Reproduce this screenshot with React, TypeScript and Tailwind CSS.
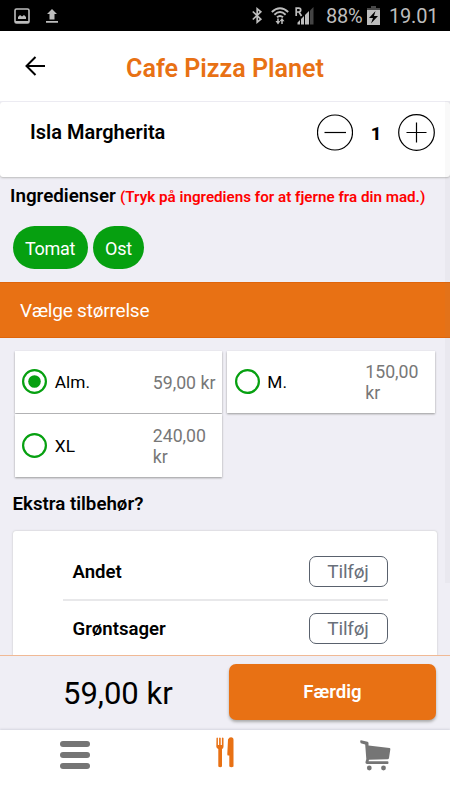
import { useState } from "react"

type SizeOptionProps = {
  label: string
  price: string
  selected: boolean
  onSelect: () => void
}

type ExtraRowProps = {
  label: string
}

const sizes = [
  { label: "Alm.", price: "59,00 kr" },
  { label: "M.", price: "150,00 kr" },
  { label: "XL", price: "240,00 kr" },
]

const ingredients = ["Tomat", "Ost"]

const StatusBar = () => (
  <div className="flex h-[31px] shrink-0 items-center bg-black text-[#bdbdbd]">
    <svg className="ml-[14px] h-4 w-4" viewBox="0 0 16 16" fill="none">
      <rect x="1" y="1" width="14" height="14" rx="1.5" stroke="currentColor" strokeWidth="1.6" />
      <path d="M1 13h14v2H1zM4 11V9l2-2 2 1.5L10 7l2 2v2z" fill="currentColor" />
    </svg>
    <svg className="ml-4 h-[14px] w-3" viewBox="0 0 12 14" fill="currentColor">
      <path d="M6 0l5 5H8.5v5.5h-5V5H1zM0 12h12v1.7H0z" />
    </svg>

    <svg className="ml-auto h-[17px] w-[11px]" viewBox="0 0 11 17" fill="none" stroke="currentColor" strokeWidth="1.7">
      <path d="M.8 4.5l8 7.700L5.200 15.200V1.800l3.600 3L.8 12.500" />
    </svg>
    <svg className="ml-[8px] h-[18px] w-[18px]" viewBox="0 0 18 18" fill="none" stroke="currentColor" strokeWidth="1.9">
      <path d="M.8 5Q9-2.500 17.200 5M3.400 7.700Q9 2.500 14.600 7.700M6 10.300Q9 7.500 12 10.300" />
      <path d="M7 11.500v3.500M11 17v-4" strokeWidth="1.500" />
      <path d="M4.500 14h5L7 17.500zM8.500 14.300h5L11 11z" fill="currentColor" stroke="none" />
    </svg>
    <svg className="ml-[6px] h-[18px] w-[19px]" viewBox="0 0 19 18">
      <path d="M1.200 9V1.200h2.600a1.900 1.900 0 0 1 0 3.800H1.200M4 5l2.500 4" fill="none" stroke="currentColor" strokeWidth="1.700" />
      <path d="M2.500 15.500L5 13v4.500H2.500zM6 12l3-3v8.500H6zM10 8l4-4v13.500h-4z" fill="currentColor" />
      <path d="M15 3.500L18.500 0v17.500H15z" fill="#444" />
    </svg>
    <span className="ml-[12px] w-[37px] text-[20px] leading-none tracking-[-0.3px] whitespace-nowrap">88%</span>
    <svg className="ml-[4px] h-[19px] w-[13px]" viewBox="0 0 13 19">
      <path d="M4 0h5v2h4v4H0V2h4z" fill="#484848" />
      <path d="M0 4h13v15H0z" fill="currentColor" />
      <path d="M8.500 5l-6.500 7h4l-2 5.500 7-7.500H7z" fill="#000" />
    </svg>
    <span className="ml-[9px] mr-[12px] w-[49px] text-[20px] leading-none tracking-[-0.2px] whitespace-nowrap">19.01</span>
  </div>
)

const Header = () => (
  <header className="flex h-[70px] shrink-0 items-center bg-white pl-[25px]">
    <button aria-label="Tilbage">
      <svg className="h-5 w-5" viewBox="0 0 20 20" fill="none" stroke="#000" strokeWidth="2">
        <path d="M20 10H2M10.500 1L1.500 10l9 9" />
      </svg>
    </button>
    <h1 className="ml-[81px] pt-[5px] text-[25.100px] font-semibold whitespace-nowrap text-[#e87114]">Cafe Pizza Planet</h1>
  </header>
)

const SizeOption = ({ label, price, selected, onSelect }: SizeOptionProps) => (
  <button onClick={onSelect} className="flex h-[62.500px] w-[207.500px] items-center bg-white pl-[7.500px] text-left shadow-[0_1px_2px_#999]">
    <svg className="h-[25px] w-[25px] shrink-0" viewBox="0 0 25 25">
      <circle cx="12.500" cy="12.500" r="11.400" fill="none" stroke="#06a010" strokeWidth="2.200" />
      {selected && <circle cx="12.500" cy="12.500" r="6.300" fill="#06a010" />}
    </svg>
    <span className="ml-[7.500px] w-[98px] shrink-0 pt-[2px] text-[17.300px]">{label}</span>
    <span className="w-[65px] pt-[2px] text-[17.700px] leading-[20.500px] text-[#777]">{price}</span>
  </button>
)

const ExtraRow = ({ label }: ExtraRowProps) => (
  <div className="flex h-[57px] items-center justify-between border-b-2 border-[#e8e8ea] pl-[10px]">
    <span className="pt-[3px] text-[18.600px] font-semibold">{label}</span>
    <button className="flex h-[31px] w-[79px] items-center justify-center rounded-[7px] border border-[#59616d] pt-[2px] text-[19px] tracking-[-0.2px] text-[#69707a]">Tilføj</button>
  </div>
)

const App = () => {
  const [selected, setSelected] = useState("Alm.")
  const [count, setCount] = useState(1)

  return (
    <div className="flex h-[800px] w-[450px] flex-col overflow-hidden bg-[#efeef5] font-['Roboto',sans-serif] text-black">
      <StatusBar />
      <Header />

      <main className="relative flex min-h-0 flex-1 flex-col overflow-hidden">
        <section className="mt-px flex h-[75px] shrink-0 rounded-[3px] bg-white pl-[30px] shadow-[0_1px_2px_#bbb]">
          <h2 className="w-[287px] pt-[17px] text-[20px] leading-[26px] font-semibold">Isla Margherita</h2>
          <button aria-label="Færre" className="mt-[12px] h-[37px] w-9" onClick={() => setCount(Math.max(1, count - 1))}>
            <svg className="h-[37px] w-9" viewBox="0 0 36 37" fill="none" stroke="#000" strokeWidth="1.200">
              <circle cx="18" cy="18.500" r="17.500" />
              <path d="M7.500 18.500h21.500" />
            </svg>
          </button>
          <span className="mt-[20px] w-[45px] pl-px text-center text-[18.500px] leading-6 font-extrabold">{count}</span>
          <button aria-label="Flere" className="mt-[12px] h-[37px] w-[37px]" onClick={() => setCount(count + 1)}>
            <svg className="h-[37px] w-[37px]" viewBox="0 0 37 37" fill="none" stroke="#000" strokeWidth="1.200">
              <circle cx="18.500" cy="18.500" r="17.800" />
              <path d="M8.500 18.500h20M18.500 8.500v20" />
            </svg>
          </button>
        </section>

        <section className="h-[105px] shrink-0 pt-[5px]">
          <div className="flex h-6 items-baseline pl-[10px] whitespace-nowrap">
            <h2 className="w-[110px] text-[18.800px] font-semibold">Ingredienser</h2>
            <span className="text-[15.200px] font-semibold text-[#f00]">(Tryk på ingrediens for at fjerne fra din mad.)</span>
          </div>
          <div className="mt-[20px] ml-[12.500px] flex gap-[5px]">
            {ingredients.map(name => (
              <button key={name} className="h-[43px] rounded-full bg-[#06a010] px-[12.500px] pt-px text-[18px] tracking-[-0.3px] text-white">{name}</button>
            ))}
          </div>
        </section>

        <h2 className="flex h-[56px] shrink-0 items-center border-y border-[#df650b] bg-[#e87114] pt-[2px] pl-5 text-[19px] tracking-[-0.200px] text-white">Vælge størrelse</h2>

        <section className="mt-[12.700px] ml-[14.800px] grid shrink-0 grid-cols-[207.500px_207.500px] gap-x-[5px] gap-y-[1.300px]">
          {sizes.map(size => (
            <SizeOption key={size.label} label={size.label} price={size.price} selected={selected === size.label} onSelect={() => setSelected(size.label)} />
          ))}
        </section>

        <h2 className="mt-[14px] ml-[12.500px] shrink-0 text-[18.700px] leading-[26px] font-semibold">Ekstra tilbehør?</h2>
        <section className="mt-[14px] mr-[13px] ml-[12.500px] h-[145px] shrink-0 rounded-[3px] bg-white pt-[13px] pr-[49.500px] pl-[50px] shadow-[0_0_2px_#bbb]">
          <ExtraRow label="Andet" />
          <ExtraRow label="Grøntsager" />
        </section>

        {/* scroll indicator */}
        <div className="pointer-events-none absolute top-0 right-0 h-[482px] w-[5px] bg-[#808080]/5" />
      </main>

      <footer className="flex h-[75px] shrink-0 border-t border-[#f0b995] bg-[#efeef5]">
        <span className="w-[229px] pt-[18px] pl-[63px] text-[31px] leading-10">{sizes.find(size => size.label === selected)?.price}</span>
        <button className="mt-2 h-[56px] w-[207px] rounded-[7px] bg-[#e87114] pt-[2px] text-[18.600px] font-semibold text-white shadow-[0_2px_3px_#aaa]">Færdig</button>
      </footer>

      <nav className="flex h-[70px] shrink-0 bg-white text-[#757575] shadow-[0_-1px_2px_#d5d5df]">
        <button aria-label="Menu" className="flex w-[150px] justify-center pt-[11px]">
          <svg className="h-7 w-[30px]" viewBox="0 0 30 28" fill="currentColor">
            <rect width="30" height="6" rx="3" />
            <rect y="11" width="30" height="6" rx="3" />
            <rect y="22" width="30" height="6" rx="3" />
          </svg>
        </button>
        <button aria-label="Mad" className="flex w-[150px] justify-center pt-[7px] text-[#e87114]">
          <svg className="h-[31px] w-[18px]" viewBox="0 0 18 31" fill="currentColor">
            <path d="M.5 1Q1.200 0 1.900 1v7h1.200V1Q3.900 0 4.700 1v7h1.200V1Q6.600 0 7.500 1v8.500q0 2-1.500 2.500V29.500Q4.200 31 2.300 29.500V12Q.3 11 .3 9.500z" />
            <path d="M12 2.500Q13 .3 15 .3q2.500 0 2.500 2.500V29.500q-2 1.500-4.200 0V18.500H12q-.7 0-.7-1.500z" />
          </svg>
        </button>
        <button aria-label="Kurv" className="flex w-[150px] justify-center pt-[10px]">
          <svg className="h-[31px] w-[31px]" viewBox="0 0 31 31" fill="currentColor">
            <path d="M1 .3l6.500 1.500q1 .3 1 1.500v2.200L29.500 8q1 .2.800 1.500L29 18q-.2 1.300-1.500 1.300L9 19.800 8.500 21.300H27.500q1 0 1 1.400T27.500 24H7q-1.800 0-1.500-2L6.300 19 5.200 4.500.8 3.300Q-.5.5 1 .3z" />
            <circle cx="9.300" cy="28" r="2.400" />
            <circle cx="23.500" cy="28" r="2.400" />
          </svg>
        </button>
      </nav>
    </div>
  )
}

export default App
